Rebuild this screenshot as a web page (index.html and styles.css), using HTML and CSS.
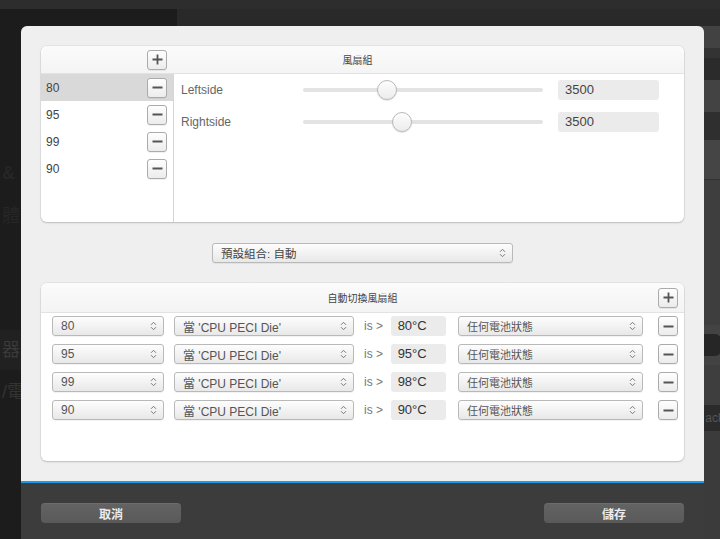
FILE: index.html
```html
<!DOCTYPE html>
<html lang="zh-Hant">
<head>
<meta charset="utf-8">
<title>風扇組</title>
<link rel="stylesheet" href="styles.css">
</head>
<body>
<div class="desktop">
  <div class="topstrip"></div>
  <div class="workspace">
    <aside class="sidebar">
      <div class="side-item s1">&amp; C</div>
      <div class="side-item s2">體</div>
      <div class="side-item s3">器</div>
      <div class="side-item s4">/電</div>
    </aside>
    <main class="mainarea">
      <div class="stripe st1"></div>
      <div class="stripe st2"></div>
      <div class="stripe st3"></div>
      <div class="stripe st4"></div>
      <div class="stripe st5"></div>
      <div class="stripe st6"></div>
      <div class="stripe st7"></div>
      <div class="stripe st8"></div>
      <div class="stripe st9"><span class="pill"></span></div>
      <div class="stripe st10"></div>
      <div class="stripe st11"><span class="ghost">ack</span></div>
      <div class="stripe st12"></div>
    </main>
  </div>
</div>

<div class="dialog">
  <div class="dialog-body">
    <section class="panel fan-panel">
      <header class="panel-head fan-head">
        <div class="head-left">
          <button class="sqbtn" aria-label="新增"><svg width="11" height="11" viewBox="0 0 11 11"><path d="M5.5 0.5v10M0.5 5.5h10" stroke="#555" stroke-width="1.8"/></svg></button>
        </div>
        <div class="head-title">風扇組</div>
      </header>
      <div class="fan-body">
        <ul class="fan-list">
          <li class="selected"><span>80</span><button class="sqbtn" aria-label="刪除"><svg width="11" height="11" viewBox="0 0 11 11"><path d="M0.5 5.5h10" stroke="#555" stroke-width="1.8"/></svg></button></li>
          <li><span>95</span><button class="sqbtn" aria-label="刪除"><svg width="11" height="11" viewBox="0 0 11 11"><path d="M0.5 5.5h10" stroke="#555" stroke-width="1.8"/></svg></button></li>
          <li><span>99</span><button class="sqbtn" aria-label="刪除"><svg width="11" height="11" viewBox="0 0 11 11"><path d="M0.5 5.5h10" stroke="#555" stroke-width="1.8"/></svg></button></li>
          <li><span>90</span><button class="sqbtn" aria-label="刪除"><svg width="11" height="11" viewBox="0 0 11 11"><path d="M0.5 5.5h10" stroke="#555" stroke-width="1.8"/></svg></button></li>
        </ul>
        <div class="fan-detail">
          <div class="fan-row">
            <span class="fan-label">Leftside</span>
            <div class="slider"><div class="track"></div><div class="thumb" style="left:74px"></div></div>
            <div class="numbox">3500</div>
          </div>
          <div class="fan-row">
            <span class="fan-label">Rightside</span>
            <div class="slider"><div class="track"></div><div class="thumb" style="left:89px"></div></div>
            <div class="numbox">3500</div>
          </div>
        </div>
      </div>
    </section>

    <div class="preset-row">
      <div class="select preset"><span class="cjk">預設組合: 自動</span><svg class="arrows" width="7" height="10" viewBox="0 0 7 10"><path d="M1 3.8L3.5 1.3 6 3.8M1 6.2L3.5 8.7 6 6.2" fill="none" stroke="#777" stroke-width="1"/></svg></div>
    </div>

    <section class="panel auto-panel">
      <header class="panel-head auto-head">
        <div></div>
        <div class="head-title">自動切換風扇組</div>
        <div class="head-right">
          <button class="sqbtn" aria-label="新增"><svg width="11" height="11" viewBox="0 0 11 11"><path d="M5.5 0.5v10M0.5 5.5h10" stroke="#555" stroke-width="1.8"/></svg></button>
        </div>
      </header>
      <div class="rules">
        <div class="rule">
          <div class="select s-fan"><span>80</span><svg class="arrows" width="7" height="10" viewBox="0 0 7 10"><path d="M1 3.8L3.5 1.3 6 3.8M1 6.2L3.5 8.7 6 6.2" fill="none" stroke="#777" stroke-width="1"/></svg></div>
          <div class="select s-sensor"><span>當 'CPU PECI Die'</span><svg class="arrows" width="7" height="10" viewBox="0 0 7 10"><path d="M1 3.8L3.5 1.3 6 3.8M1 6.2L3.5 8.7 6 6.2" fill="none" stroke="#777" stroke-width="1"/></svg></div>
          <span class="is">is &gt;</span>
          <div class="tempbox">80°C</div>
          <div class="select s-battery"><span class="cjk">任何電池狀態</span><svg class="arrows" width="7" height="10" viewBox="0 0 7 10"><path d="M1 3.8L3.5 1.3 6 3.8M1 6.2L3.5 8.7 6 6.2" fill="none" stroke="#777" stroke-width="1"/></svg></div>
          <button class="sqbtn" aria-label="刪除"><svg width="11" height="11" viewBox="0 0 11 11"><path d="M0.5 5.5h10" stroke="#555" stroke-width="1.8"/></svg></button>
        </div>
        <div class="rule">
          <div class="select s-fan"><span>95</span><svg class="arrows" width="7" height="10" viewBox="0 0 7 10"><path d="M1 3.8L3.5 1.3 6 3.8M1 6.2L3.5 8.7 6 6.2" fill="none" stroke="#777" stroke-width="1"/></svg></div>
          <div class="select s-sensor"><span>當 'CPU PECI Die'</span><svg class="arrows" width="7" height="10" viewBox="0 0 7 10"><path d="M1 3.8L3.5 1.3 6 3.8M1 6.2L3.5 8.7 6 6.2" fill="none" stroke="#777" stroke-width="1"/></svg></div>
          <span class="is">is &gt;</span>
          <div class="tempbox">95°C</div>
          <div class="select s-battery"><span class="cjk">任何電池狀態</span><svg class="arrows" width="7" height="10" viewBox="0 0 7 10"><path d="M1 3.8L3.5 1.3 6 3.8M1 6.2L3.5 8.7 6 6.2" fill="none" stroke="#777" stroke-width="1"/></svg></div>
          <button class="sqbtn" aria-label="刪除"><svg width="11" height="11" viewBox="0 0 11 11"><path d="M0.5 5.5h10" stroke="#555" stroke-width="1.8"/></svg></button>
        </div>
        <div class="rule">
          <div class="select s-fan"><span>99</span><svg class="arrows" width="7" height="10" viewBox="0 0 7 10"><path d="M1 3.8L3.5 1.3 6 3.8M1 6.2L3.5 8.7 6 6.2" fill="none" stroke="#777" stroke-width="1"/></svg></div>
          <div class="select s-sensor"><span>當 'CPU PECI Die'</span><svg class="arrows" width="7" height="10" viewBox="0 0 7 10"><path d="M1 3.8L3.5 1.3 6 3.8M1 6.2L3.5 8.7 6 6.2" fill="none" stroke="#777" stroke-width="1"/></svg></div>
          <span class="is">is &gt;</span>
          <div class="tempbox">98°C</div>
          <div class="select s-battery"><span class="cjk">任何電池狀態</span><svg class="arrows" width="7" height="10" viewBox="0 0 7 10"><path d="M1 3.8L3.5 1.3 6 3.8M1 6.2L3.5 8.7 6 6.2" fill="none" stroke="#777" stroke-width="1"/></svg></div>
          <button class="sqbtn" aria-label="刪除"><svg width="11" height="11" viewBox="0 0 11 11"><path d="M0.5 5.5h10" stroke="#555" stroke-width="1.8"/></svg></button>
        </div>
        <div class="rule">
          <div class="select s-fan"><span>90</span><svg class="arrows" width="7" height="10" viewBox="0 0 7 10"><path d="M1 3.8L3.5 1.3 6 3.8M1 6.2L3.5 8.7 6 6.2" fill="none" stroke="#777" stroke-width="1"/></svg></div>
          <div class="select s-sensor"><span>當 'CPU PECI Die'</span><svg class="arrows" width="7" height="10" viewBox="0 0 7 10"><path d="M1 3.8L3.5 1.3 6 3.8M1 6.2L3.5 8.7 6 6.2" fill="none" stroke="#777" stroke-width="1"/></svg></div>
          <span class="is">is &gt;</span>
          <div class="tempbox">90°C</div>
          <div class="select s-battery"><span class="cjk">任何電池狀態</span><svg class="arrows" width="7" height="10" viewBox="0 0 7 10"><path d="M1 3.8L3.5 1.3 6 3.8M1 6.2L3.5 8.7 6 6.2" fill="none" stroke="#777" stroke-width="1"/></svg></div>
          <button class="sqbtn" aria-label="刪除"><svg width="11" height="11" viewBox="0 0 11 11"><path d="M0.5 5.5h10" stroke="#555" stroke-width="1.8"/></svg></button>
        </div>
      </div>
    </section>
  </div>
  <footer class="dialog-foot">
    <button class="footbtn">取消</button>
    <button class="footbtn">儲存</button>
  </footer>
</div>
</body>
</html>
```

FILE: styles.css
```css
* { box-sizing: border-box; }

html, body {
  margin: 0;
  width: 720px;
  height: 539px;
  overflow: hidden;
}

body {
  position: relative;
  background: #2a2a2a;
  font-family: "Liberation Sans", "Noto Sans CJK TC", sans-serif;
  font-size: 12px;
  color: #444;
}

/* ---------- background desktop ---------- */
.desktop {
  display: grid;
  grid-template-rows: 9px 1fr;
  height: 539px;
}
.topstrip { background: #2d2d2d; }
.workspace {
  display: grid;
  grid-template-columns: 177px 1fr;
}
.sidebar {
  background: #1c1c1c;
  display: flex;
  flex-direction: column;
  font-size: 18px;
  color: #262626;
}
.side-item { height: 40px; line-height: 40px; padding-left: 2px; }
.s1 { margin-top: 144px; font-weight: bold; }
.s2 { margin-top: 3px; }
.s3 { margin-top: 94px; background: #212121; color: #3a3a3a; }
.s4 { margin-top: 2px; color: #333; }

.mainarea {
  background: #3a3a3a;
  display: flex;
  flex-direction: column;
}
.stripe { flex: none; }
.st1 { height: 17px; background: #292929; }
.st2 { height: 22px; background: #424242; }
.st3 { height: 10px; background: #333; }
.st4 { height: 22px; background: #2b2b2b; }
.st5 { height: 32px; background: #434343; }
.st6 { height: 28px; background: #2f2f2f; }
.st7 { height: 40px; background: #454545; border-bottom: 1px solid #333; }
.st8 { height: 145px; background: #3e3e3e; }
.st9 { height: 40px; background: #434343; display: flex; justify-content: flex-end; align-items: center; }
.pill { width: 544px; height: 22px; border-radius: 6px; background: #262626; margin-right: 4px; }
.st10 { height: 40px; background: #3e3e3e; }
.st11 { height: 26px; background: #2b2b2b; display: flex; justify-content: flex-end; align-items: center; }
.ghost { color: #555; font-size: 12px; margin-right: 1px; }
.st12 { flex: 1; background: #3b3b3b; }

/* ---------- dialog ---------- */
.dialog {
  position: absolute;
  left: 21px;
  top: 26px;
  width: 683px;
  height: 513px;
  background: #efefef;
  border-radius: 6px 6px 0 0;
  display: flex;
  flex-direction: column;
}
.dialog-body {
  flex: 1;
  padding: 20px 20px 0;
  display: flex;
  flex-direction: column;
}

.panel {
  background: #fff;
  border-radius: 6px;
  box-shadow: 0 0 0 1px rgba(0,0,0,0.04), 0 1px 2px rgba(0,0,0,0.18);
  overflow: hidden;
}
.panel-head {
  background: linear-gradient(#fbfbfb, #f4f4f4);
  border-bottom: 1px solid #e2e2e2;
}
.head-title {
  font-size: 10px;
  color: #444;
  text-align: center;
}

button { font-family: inherit; }
.sqbtn {
  width: 20px;
  height: 20px;
  padding: 0;
  border: 1px solid #ababab;
  border-radius: 3px;
  background: linear-gradient(#fefefe, #ececec);
  box-shadow: 0 1px 0 rgba(0,0,0,0.06);
  display: flex;
  align-items: center;
  justify-content: center;
  flex: none;
}

/* fan panel */
.fan-panel { height: 176px; display: flex; flex-direction: column; }
.fan-head {
  height: 28px;
  display: grid;
  grid-template-columns: 132px 1fr;
  align-items: center;
}
.head-left { display: flex; justify-content: flex-end; padding-right: 6px; }
.fan-head .head-title { padding-right: 142px; }

.fan-body { flex: 1; display: flex; }
.fan-list {
  list-style: none;
  margin: 0;
  padding: 0;
  width: 133px;
  border-right: 1px solid #d6d6d6;
}
.fan-list li {
  height: 27px;
  display: flex;
  align-items: center;
  justify-content: space-between;
  padding: 0 6px 0 5px;
  color: #444;
}
.fan-list li.selected { background: #d9d9d9; }

.fan-detail {
  flex: 1;
  padding: 6px 25px 0 7px;
  display: flex;
  flex-direction: column;
  gap: 12px;
}
.fan-row { height: 20px; display: flex; align-items: center; }
.fan-label { width: 122px; color: #666; }
.slider { position: relative; width: 240px; height: 20px; }
.track {
  position: absolute;
  left: 0; right: 0; top: 8px;
  height: 4px;
  border-radius: 2px;
  background: #e3e3e3;
}
.thumb {
  position: absolute;
  top: 0;
  width: 20px;
  height: 20px;
  border-radius: 50%;
  border: 1px solid #b9b9b9;
  background: linear-gradient(#fdfdfd, #ececec);
  box-shadow: 0 1px 1px rgba(0,0,0,0.12);
}
.numbox {
  margin-left: 15px;
  width: 101px;
  height: 20px;
  background: #ebebeb;
  border-radius: 3px;
  font-size: 13px;
  line-height: 20px;
  padding-left: 7px;
  color: #444;
}

/* preset */
.preset-row {
  height: 61px;
  display: flex;
  align-items: center;
  padding-left: 171px;
}

.select {
  height: 20px;
  border: 1px solid #b9b9b9;
  border-radius: 3px;
  background: linear-gradient(#fdfdfd, #e8e8e8);
  box-shadow: 0 1px 0 rgba(0,0,0,0.05);
  display: flex;
  align-items: center;
  justify-content: space-between;
  padding: 0 6px 0 8px;
  color: #555;
  white-space: nowrap;
  flex: none;
}
.select .cjk { font-size: 11px; }
.preset { width: 301px; }
.preset .cjk { font-size: 11.5px; color: #444; }

/* auto panel */
.auto-panel { height: 178px; }
.auto-head {
  height: 30px;
  display: grid;
  grid-template-columns: 1fr auto 1fr;
  align-items: center;
}
.head-right { display: flex; justify-content: flex-end; padding-right: 6px; }

.rules {
  padding: 3px 6px 0 11px;
  display: flex;
  flex-direction: column;
  gap: 8px;
}
.rule { height: 20px; display: flex; align-items: center; }
.s-fan { width: 112px; }
.s-sensor { width: 180px; margin-left: 10px; }
.is { margin-left: 10px; width: 27px; color: #777; }
.tempbox {
  width: 56px;
  height: 20px;
  background: #ebebeb;
  border-radius: 3px;
  font-size: 13px;
  line-height: 20px;
  padding-left: 7px;
  color: #333;
}
.s-battery { width: 185px; margin-left: 12px; }
.rule .sqbtn { margin-left: 15px; }

/* footer */
.dialog-foot {
  height: 58px;
  border-top: 2px solid #1e9be4;
  background: #3c3c3c;
  display: flex;
  justify-content: space-between;
  align-items: flex-start;
  padding: 20px 20px 0;
}
.footbtn {
  width: 140px;
  height: 20px;
  border: none;
  border-radius: 4px;
  background: linear-gradient(#636363, #595959);
  box-shadow: inset 0 1px 0 rgba(255,255,255,0.06);
  color: #ececec;
  font-size: 12px;
  font-weight: bold;
  padding: 0;
}
```
